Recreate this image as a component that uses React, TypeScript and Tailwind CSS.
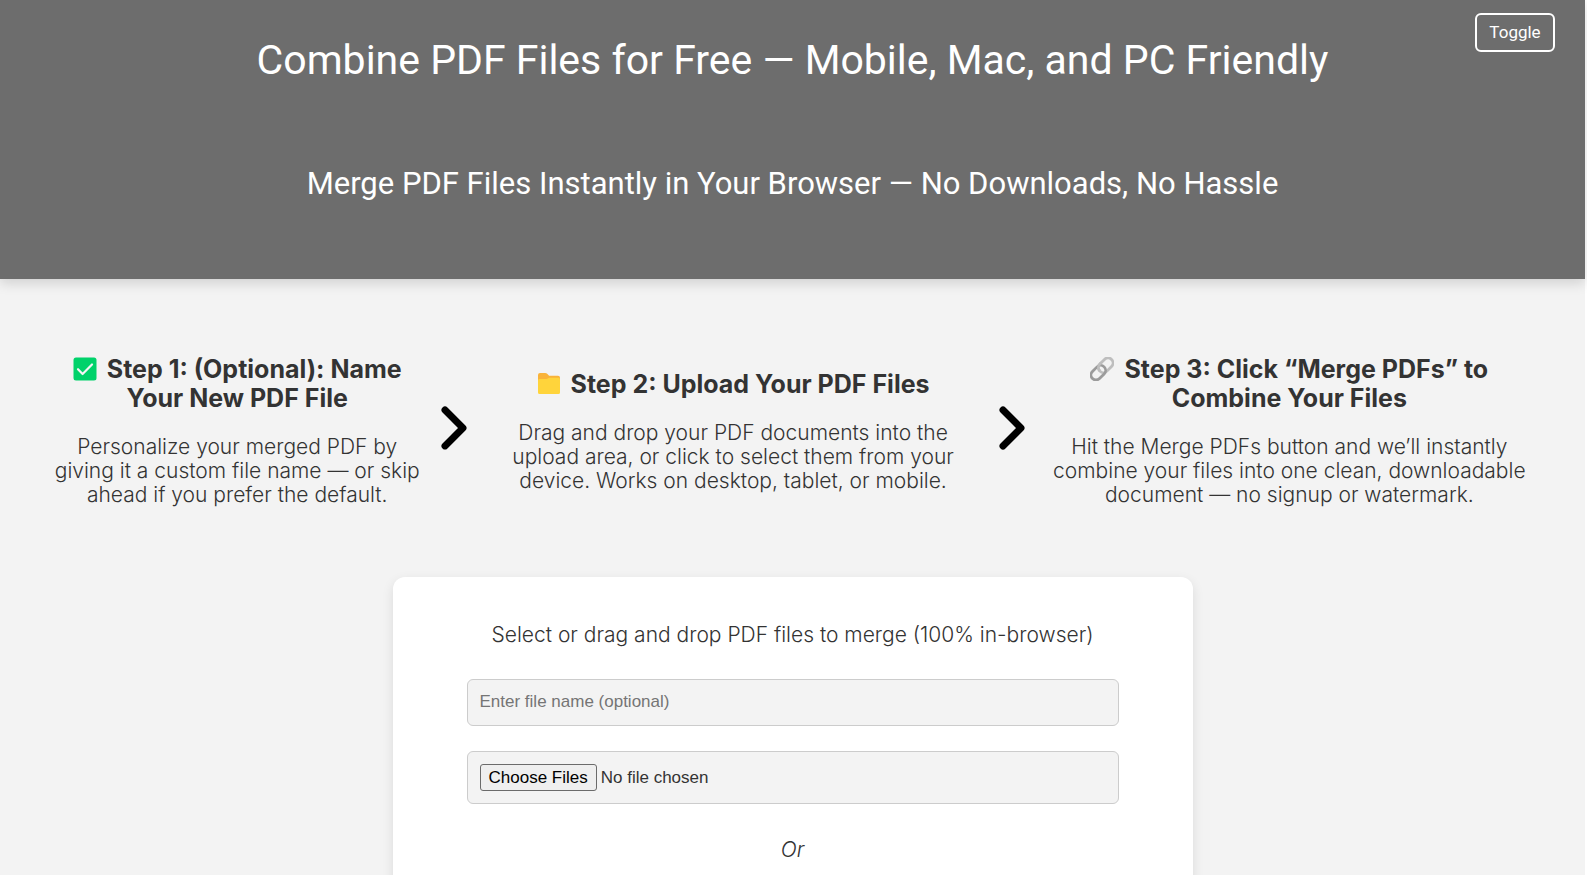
import React, { useState } from "react";

const CheckIcon = () => (
  <svg viewBox="0 0 24 24" className="inline-block w-6 h-6 mr-[10px] align-[-3px]" aria-hidden="true">
    <rect x="0.5" y="0.5" width="23" height="23" rx="2.5" fill="#00d26a" />
    <path
      d="M5 12.2l4.600 4.800L19 7.500"
      fill="none"
      stroke="#f4f4f4"
      strokeWidth="2.2"
      strokeLinecap="round"
      strokeLinejoin="round"
    />
  </svg>
);

const FolderIcon = () => (
  <svg viewBox="0 0 24 24" className="inline-block w-6 h-6 mr-[10px] align-[-3px]" aria-hidden="true">
    <path d="M1 3a2 2 0 0 1 2-2h5.200c.7 0 1.200.2 1.700.6l2.200 2.200H21a2 2 0 0 1 2 2v4H1z" fill="#f9b33a" />
    <path d="M1 8.500A1.500 1.500 0 0 1 2.500 7h6.800c.6 0 1.100-.1 1.500-.4l.8-.5c.4-.2.800-.3 1.300-.3H21.500A1.500 1.500 0 0 1 23 7.300V20.500A1.500 1.500 0 0 1 21.500 22h-19A1.500 1.500 0 0 1 1 20.500z" fill="#ffd43b" />
  </svg>
);

const LinkIcon = () => (
  <svg viewBox="0 0 24 24" className="inline-block w-6 h-6 mr-[10px] align-[-3px]" aria-hidden="true">
    <g fill="none" strokeWidth="2.8" transform="rotate(-45 12 12)">
      <rect x="9" y="7" width="16.500" height="10" rx="5" stroke="#bebebe" />
      <rect x="-1.500" y="7" width="16.500" height="10" rx="5" stroke="#9b9b9b" />
      <path d="M9 12a5 5 0 0 1 5-5h2" stroke="#bebebe" />
    </g>
  </svg>
);

const Arrow = () => (
  <svg viewBox="0 0 26 44" className="w-full mb-1.5" aria-hidden="true">
    <path
      d="M4 4l18 18L4 40"
      fill="none"
      stroke="#000"
      strokeWidth="7"
      strokeLinecap="round"
      strokeLinejoin="round"
    />
  </svg>
);

interface IStepProps {
  icon: React.ReactNode;
  title: string;
  text: string;
  className: string;
}

const Step = ({ icon, title, text, className }: IStepProps) => (
  <div className={className}>
    <h3 className="text-[25px] leading-[29px] font-bold">
      {icon}
      {title}
    </h3>
    <p className="mt-[22px] text-[21px] leading-6 font-light">{text}</p>
  </div>
);

export default function App() {
  const [fileName, setFileName] = useState("");
  const [dark, setDark] = useState(false);

  return (
    <div
      className={
        dark
          ? "min-h-screen border-r-2 border-white bg-[#222222] text-[#f3f3f3] font-['Inter',sans-serif]"
          : "min-h-screen border-r-2 border-white bg-[#f3f3f3] text-[#333333] font-['Inter',sans-serif]"
      }
    >
      <header className="relative bg-[#6d6d6d] text-white text-center font-['Roboto',sans-serif] pt-8 pb-[73px] shadow-[0_4px_12px_rgba(0,0,0,0.15)]">
        <h1 className="text-[41px] leading-[56px]">
          Combine PDF Files for Free — Mobile, Mac, and PC Friendly
        </h1>
        <h2 className="mt-[74px] text-[31px] leading-[44px]">
          Merge PDF Files Instantly in Your Browser — No Downloads, No Hassle
        </h2>
        <button
          type="button"
          onClick={() => setDark(!dark)}
          className="absolute top-[13px] right-[30px] w-20 h-[39px] border-2 border-white rounded-md text-[17px]"
        >
          Toggle
        </button>
      </header>

      <main>
        <section className="grid grid-cols-[397fr_26fr_532fr_26fr_518fr] items-center pl-[45px] pr-[43px] pt-[76px] text-center">
          <Step
            className="pl-1 pr-4"
            icon={<CheckIcon />}
            title="Step 1: (Optional): Name Your New PDF File"
            text="Personalize your merged PDF by giving it a custom file name — or skip ahead if you prefer the default."
          />
          <Arrow />
          <Step
            className="px-8"
            icon={<FolderIcon />}
            title="Step 2: Upload Your PDF Files"
            text="Drag and drop your PDF documents into the upload area, or click to select them from your device. Works on desktop, tablet, or mobile."
          />
          <Arrow />
          <Step
            className="pl-6 pr-3"
            icon={<LinkIcon />}
            title="Step 3: Click “Merge PDFs” to Combine Your Files"
            text="Hit the Merge PDFs button and we’ll instantly combine your files into one clean, downloadable document — no signup or watermark."
          />
        </section>

        <form
          onSubmit={(e) => e.preventDefault()}
          className="mt-[70px] mx-auto max-w-[800px] bg-white text-[#333333] rounded-xl px-[74px] pt-[46px] pb-10 text-center shadow-[0_4px_12px_rgba(0,0,0,0.1)]"
        >
          <label htmlFor="pdfFiles" className="block text-[21px] leading-6 font-light">
            Select or drag and drop PDF files to merge (100% in-browser)
          </label>
          <input
            type="text"
            aria-label="File name"
            placeholder="Enter file name (optional)"
            value={fileName}
            onChange={(e) => setFileName(e.target.value)}
            className="mt-8 block w-full h-[47px] px-3 pb-0.5 bg-[#f3f3f3] border border-[#cccccc] rounded-md font-['Liberation_Sans',sans-serif] text-[17px] placeholder:text-[#757575]"
          />
          <input
            type="file"
            id="pdfFiles"
            multiple
            className="mt-[25px] block w-full p-3 bg-[#f3f3f3] border border-[#cccccc] rounded-md font-['Liberation_Sans',sans-serif] text-[17px] leading-[25px] file:h-[27px] file:px-2 file:border file:border-solid file:border-[#6b6b6b] file:rounded-[3px] file:bg-[#efefef] file:text-black"
          />
          <p className="mt-[34px] text-[21px] leading-6 font-light italic">Or</p>
        </form>
      </main>
    </div>
  );
}
